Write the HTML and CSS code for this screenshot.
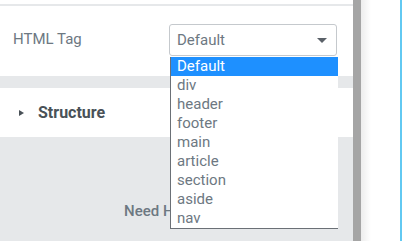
FILE: index.html
```html
<!DOCTYPE html>
<html lang="en">
<head>
    <meta charset="UTF-8">
    <title>HTML Tag</title>
    <link rel="stylesheet" href="styles.css">
</head>
<body>
    <div class="screen">
        <div class="panel">
            <div class="top-line"></div>

            <div class="control-row">
                <label class="control-label">HTML Tag</label>
                <div class="select-wrap">
                    <div class="select-box">
                        <span>Default</span>
                        <span class="caret"></span>
                    </div>
                    <ul class="select-list">
                        <li class="selected">Default</li>
                        <li>div</li>
                        <li>header</li>
                        <li>footer</li>
                        <li>main</li>
                        <li>article</li>
                        <li>section</li>
                        <li>aside</li>
                        <li>nav</li>
                    </ul>
                </div>
            </div>

            <div class="separator"></div>

            <div class="section-head">
                <span class="arrow"></span>
                <span class="section-title">Structure</span>
            </div>

            <div class="panel-footer">
                <div class="need-help">Need Help</div>
            </div>
        </div>
        <div class="scrollbar"></div>
        <div class="preview">
            <div class="preview-edge"></div>
        </div>
    </div>
</body>
</html>
```

FILE: styles.css
```css
* {
    margin: 0;
    padding: 0;
    box-sizing: border-box;
}

body {
    width: 405px;
    height: 241px;
    overflow: hidden;
    font-family: Roboto, 'Liberation Sans', Arial, sans-serif;
    background: white;
}

.screen {
    display: flex;
    height: 241px;
}

.panel {
    width: 353px;
    display: flex;
    flex-direction: column;
    background: #e6e8ea;
}

.top-line {
    height: 6px;
    background: white;
    border-bottom: 2px solid #e6e8ea;
}

.control-row {
    height: 70px;
    background: white;
    display: flex;
    align-items: flex-start;
    padding: 18px 0 0 13px;
}

.control-label {
    width: 156px;
    padding-top: 6px;
    font-size: 15px;
    color: #6d7882;
}

.select-wrap {
    position: relative;
    width: 168px;
}

.select-box {
    height: 32px;
    border: 1px solid #c5c9cd;
    border-radius: 3px;
    display: flex;
    align-items: center;
    justify-content: space-between;
    padding: 0 9px 0 7px;
    font-size: 15px;
    color: #6d7882;
}

.caret {
    width: 0;
    height: 0;
    border-left: 5px solid transparent;
    border-right: 5px solid transparent;
    border-top: 5px solid #5a6168;
    margin-top: 1px;
}

.select-list {
    position: absolute;
    top: 33px;
    left: 1px;
    width: 168px;
    list-style: none;
    background: white;
    border-left: 1px solid #6b7076;
    border-bottom: 1px solid #6b7076;
    z-index: 2;
}

.select-list li {
    height: 19px;
    line-height: 19px;
    padding-left: 6px;
    font-size: 15px;
    color: #6d7882;
}

.select-list li.selected {
    background: #1e90ff;
    color: white;
}

.separator {
    height: 12px;
    background: #e6e8ea;
}

.section-head {
    height: 49px;
    background: white;
    display: flex;
    align-items: center;
    padding-left: 19px;
}

.arrow {
    width: 0;
    height: 0;
    border-top: 3.5px solid transparent;
    border-bottom: 3.5px solid transparent;
    border-left: 5px solid #495157;
    margin: 1px 14px 0 0;
}

.section-title {
    font-size: 16px;
    font-weight: bold;
    color: #495157;
}

.panel-footer {
    flex: 1;
    padding: 65px 0 0 124px;
}

.need-help {
    font-size: 15px;
    font-weight: 500;
    color: #6d7882;
}

.scrollbar {
    width: 8px;
    background: #a5a5a5;
}

.preview {
    flex: 1;
    display: flex;
    justify-content: flex-end;
    padding-right: 3px;
    background: linear-gradient(90deg, rgba(0, 0, 0, 0.07), rgba(0, 0, 0, 0) 10px), white;
}

.preview-edge {
    width: 2px;
    background: #62c9f2;
}
```
